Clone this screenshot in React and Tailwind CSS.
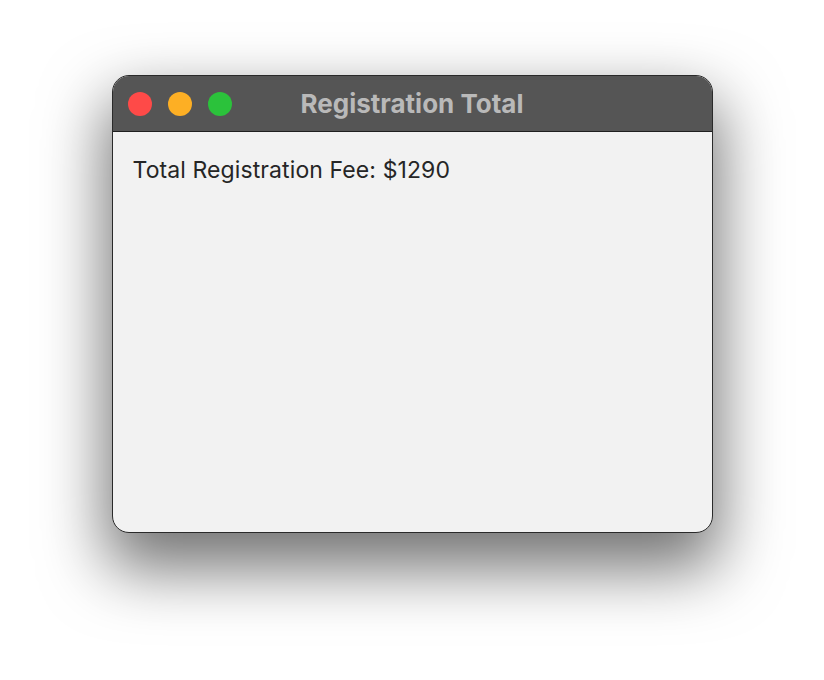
export default function App() {
  return (
    <div className="w-[824px] h-[680px] bg-white flex justify-center pt-[75px]" style={{ fontFamily: 'Inter, "Noto Sans", sans-serif' }}>
      <div className="w-[601px] h-[458px] rounded-[17px] border border-[#2a2a2a] overflow-hidden bg-[#f2f2f2] flex flex-col shadow-[0_30px_64px_6px_rgba(0,0,0,0.55)]">
        <div className="h-[56px] shrink-0 bg-[#555555] border-b border-[#1f1f1f] grid grid-cols-[1fr_auto_1fr] items-center px-[15px]">
          <div className="flex items-center gap-[16px]">
            <span className="w-[24px] h-[24px] rounded-full bg-[#fe4a48]" />
            <span className="w-[24px] h-[24px] rounded-full bg-[#fdaf24]" />
            <span className="w-[24px] h-[24px] rounded-full bg-[#2bc23b]" />
          </div>
          <div className="text-[26px] font-bold text-[#b9b9b9] leading-none">Registration Total</div>
          <div />
        </div>
        <div className="px-[20px] pt-[24px] text-[23px] leading-[28px] text-[#262626] tracking-[0.1px]">
          Total Registration Fee: $1290
        </div>
      </div>
    </div>
  );
}
